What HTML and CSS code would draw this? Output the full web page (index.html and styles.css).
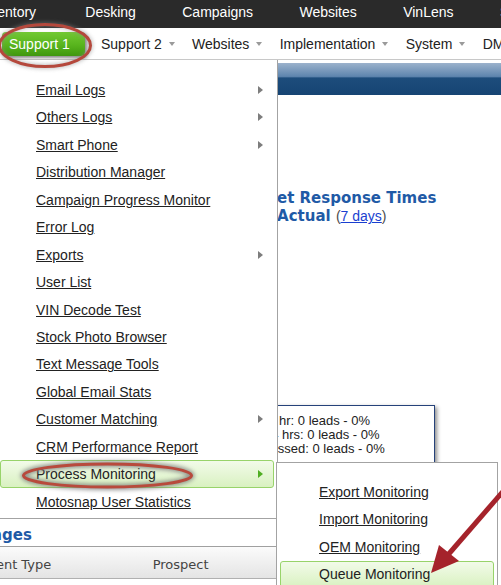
FILE: index.html
```html
<!DOCTYPE html>
<html lang="en">
<head>
<meta charset="utf-8">
<title>Support menu</title>
<link rel="stylesheet" href="styles.css">
</head>
<body>
<div class="page">
  <header class="topbar">
    <a class="top-item first">Inventory</a>
    <a class="top-item">Desking</a>
    <a class="top-item">Campaigns</a>
    <a class="top-item">Websites</a>
    <a class="top-item">VinLens</a>
    <a class="top-item">Service</a>
  </header>

  <nav class="mainnav">
    <span class="nav-btn">Support 1</span>
    <span class="nav-item">Support 2<i class="caret"></i></span>
    <span class="nav-item">Websites<i class="caret"></i></span>
    <span class="nav-item">Implementation<i class="caret"></i></span>
    <span class="nav-item">System<i class="caret"></i></span>
    <span class="nav-item">DMS<i class="caret"></i></span>
  </nav>

  <main class="content">
    <div class="bluebar"></div>
    <h2 class="rt rt1">Internet Response Times</h2>
    <div class="rt rt2">Goal vs. Actual <span class="paren">(<a class="days">7 days</a>)</span></div>
    <div class="leadbox">
      <div class="lb1">&lt; 1 hr: 0 leads - 0%</div>
      <div class="lb2">1-24 hrs: 0 leads - 0%</div>
      <div class="lb3">Not Processed: 0 leads - 0%</div>
    </div>
    <h2 class="section-title">Lead Changes</h2>
    <div class="thead">
      <span class="th th1">Event Type</span>
      <span class="th">Prospect</span>
    </div>
  </main>

  <ul class="menu">
    <li class="menu-item"><a>Email Logs</a><i class="sub-arrow"></i></li>
    <li class="menu-item"><a>Others Logs</a><i class="sub-arrow"></i></li>
    <li class="menu-item"><a>Smart Phone</a><i class="sub-arrow"></i></li>
    <li class="menu-item"><a>Distribution Manager</a></li>
    <li class="menu-item"><a>Campaign Progress Monitor</a></li>
    <li class="menu-item"><a>Error Log</a></li>
    <li class="menu-item"><a>Exports</a><i class="sub-arrow"></i></li>
    <li class="menu-item"><a>User List</a></li>
    <li class="menu-item"><a>VIN Decode Test</a></li>
    <li class="menu-item"><a>Stock Photo Browser</a></li>
    <li class="menu-item"><a>Text Message Tools</a></li>
    <li class="menu-item"><a>Global Email Stats</a></li>
    <li class="menu-item"><a>Customer Matching</a><i class="sub-arrow"></i></li>
    <li class="menu-item"><a>CRM Performance Report</a></li>
    <li class="menu-item active"><a>Process Monitoring</a><i class="sub-arrow"></i></li>
    <li class="menu-item"><a>Motosnap User Statistics</a></li>
  </ul>

  <ul class="submenu">
    <li class="menu-item sub"><a>Export Monitoring</a></li>
    <li class="menu-item sub"><a>Import Monitoring</a></li>
    <li class="menu-item sub"><a>OEM Monitoring</a></li>
    <li class="menu-item sub active"><a>Queue Monitoring</a></li>
  </ul>

  <svg class="annot" width="501" height="585" viewBox="0 0 501 585" aria-hidden="true">
    <defs>
      <filter id="soft" x="-20%" y="-60%" width="140%" height="220%">
        <feGaussianBlur stdDeviation="2.2"/>
      </filter>
    </defs>
    <ellipse cx="45" cy="45.5" rx="45.5" ry="21" fill="none" stroke="#8a8a8a" stroke-width="4" filter="url(#soft)" opacity="0.6"/>
    <ellipse cx="45" cy="45.5" rx="45.5" ry="21" fill="none" stroke="#b5483c" stroke-width="3"/>
    <ellipse cx="107.5" cy="475.5" rx="84" ry="11.5" fill="none" stroke="#7a7a7a" stroke-width="6" filter="url(#soft)" opacity="0.8"/>
    <ellipse cx="107.5" cy="475.5" rx="84" ry="11.5" fill="none" stroke="#b84a3c" stroke-width="3"/>
    <line x1="506" y1="488" x2="447" y2="556" stroke="#a5232b" stroke-width="5"/>
    <polygon points="431,573 439,545 459,561" fill="#a5232b"/>
  </svg>
</div>
</body>
</html>
```

FILE: styles.css
```css
html, body {
  margin: 0;
  padding: 0;
  overflow: hidden;
}

body {
  width: 501px;
  height: 585px;
  background: #fff;
  font-family: "Liberation Sans", Arial, sans-serif;
}

.page {
  position: relative;
  width: 501px;
  height: 585px;
  overflow: hidden;
}

/* ---------- top dark bar ---------- */
.topbar {
  display: flex;
  height: 28px;
  margin-left: -44.7px;
  background: #2a2a2a;
  white-space: nowrap;
}

.top-item {
  flex: none;
  padding: 0 23.2px;
  color: #fff;
  font-size: 14px;
  line-height: 24px;
}

.top-item.first {
  padding-right: 26px;
}

/* ---------- second nav bar ---------- */
.mainnav {
  display: flex;
  align-items: center;
  height: 31px;
  padding-left: 2px;
  border-bottom: 1px solid #c8c8c8;
  white-space: nowrap;
}

.nav-btn {
  flex: none;
  width: 76px;
  height: 24px;
  padding-left: 7px;
  margin-right: 16px;
  border-radius: 4px;
  background: linear-gradient(#72c933, #58b41d 55%, #3f970f);
  box-shadow: 2px 2px 3px rgba(0, 0, 0, 0.45);
  color: #fff;
  font-size: 14px;
  line-height: 24px;
}

.nav-item {
  flex: none;
  display: flex;
  align-items: center;
  margin-right: 17.3px;
  color: #222;
  font-size: 14px;
}

.caret {
  width: 0;
  height: 0;
  margin-left: 7px;
  margin-top: 1px;
  border-left: 3.5px solid transparent;
  border-right: 3.5px solid transparent;
  border-top: 4px solid #9a9a9a;
}

/* ---------- page content behind the menu ---------- */
.bluebar {
  height: 32px;
  margin-top: 3px;
  background: linear-gradient(#9bb2cc, #5e85ae 42%, #1d4d7c 47%, #164473);
}

.rt {
  margin: 0;
  color: #1f5aa6;
  font-family: "DejaVu Sans", Verdana, sans-serif;
  font-size: 15px;
  font-weight: bold;
  line-height: 18px;
  white-space: nowrap;
}

.rt1 {
  margin-top: 94.4px;
  margin-left: 225.3px;
}

.rt2 {
  margin-left: 204.3px;
}

.paren {
  color: #4a4a4a;
  font-family: "Liberation Sans", Arial, sans-serif;
  font-size: 14px;
  font-weight: normal;
}

.days {
  color: #1a3fd0;
  text-decoration: underline;
}

.leadbox {
  width: 283px;
  margin-top: 179.6px;
  margin-left: 150px;
  padding: 8px 0 6px;
  border: 1px solid #26427a;
  box-shadow: 2px 2px 4px rgba(0, 0, 0, 0.45);
  color: #222;
  font-size: 13px;
  line-height: 14px;
  white-space: nowrap;
}

.lb1 { padding-left: 106px; }
.lb2 { padding-left: 101.4px; }
.lb3 { padding-left: 69px; }

.section-title {
  margin: 63.3px 0 0 -86.3px;
  color: #1f5aa6;
  font-family: "DejaVu Sans", Verdana, sans-serif;
  font-size: 15px;
  font-weight: bold;
  line-height: 18px;
  white-space: nowrap;
}

.thead {
  display: flex;
  align-items: center;
  box-sizing: border-box;
  width: 500px;
  height: 33px;
  margin-top: 1.7px;
  margin-left: -28px;
  padding-top: 5px;
  border-top: 1px solid #a0a0a0;
  border-bottom: 1px solid #b0b0b0;
  background: linear-gradient(#fbfbfb, #e4e4e4);
  color: #444;
  font-family: "DejaVu Sans", Verdana, sans-serif;
  font-size: 13px;
  white-space: nowrap;
}

.th1 {
  width: 172.7px;
  padding-left: 8px;
}

/* ---------- dropdown menus ---------- */
.menu {
  position: absolute;
  left: -3px;
  top: 60px;
  width: 280px;
  margin: 0;
  padding: 16.3px 0 2.5px;
  list-style: none;
  background: #fff;
  border-right: 1px solid #a3a3a3;
  border-bottom: 1px solid #a3a3a3;
}

.menu-item {
  display: flex;
  align-items: center;
  justify-content: space-between;
  box-sizing: border-box;
  height: 27.45px;
  margin: 0 3px;
  padding: 0 10px 0 35px;
  border: 1px solid transparent;
  border-radius: 3px;
  font-size: 14px;
  white-space: nowrap;
}

.menu-item a {
  color: #222;
  text-decoration: underline;
}

.menu-item.active {
  border-color: #98d36a;
  background: linear-gradient(#f2fbe9, #d9f1c1);
}

.menu-item.active a {
  text-decoration: none;
}

.sub-arrow {
  width: 0;
  height: 0;
  border-left: 5px solid #7d7d7d;
  border-top: 4.5px solid transparent;
  border-bottom: 4.5px solid transparent;
}

.active .sub-arrow {
  border-left-color: #4fae22;
}

.submenu {
  position: absolute;
  left: 276px;
  top: 462px;
  width: 220px;
  margin: 0;
  padding: 15.3px 0 0;
  list-style: none;
  background: #fff;
  border: 1px solid #a3a3a3;
}

.menu-item.sub {
  padding-left: 38px;
}

/* ---------- annotations ---------- */
.annot {
  position: absolute;
  left: 0;
  top: 0;
  pointer-events: none;
}
```
